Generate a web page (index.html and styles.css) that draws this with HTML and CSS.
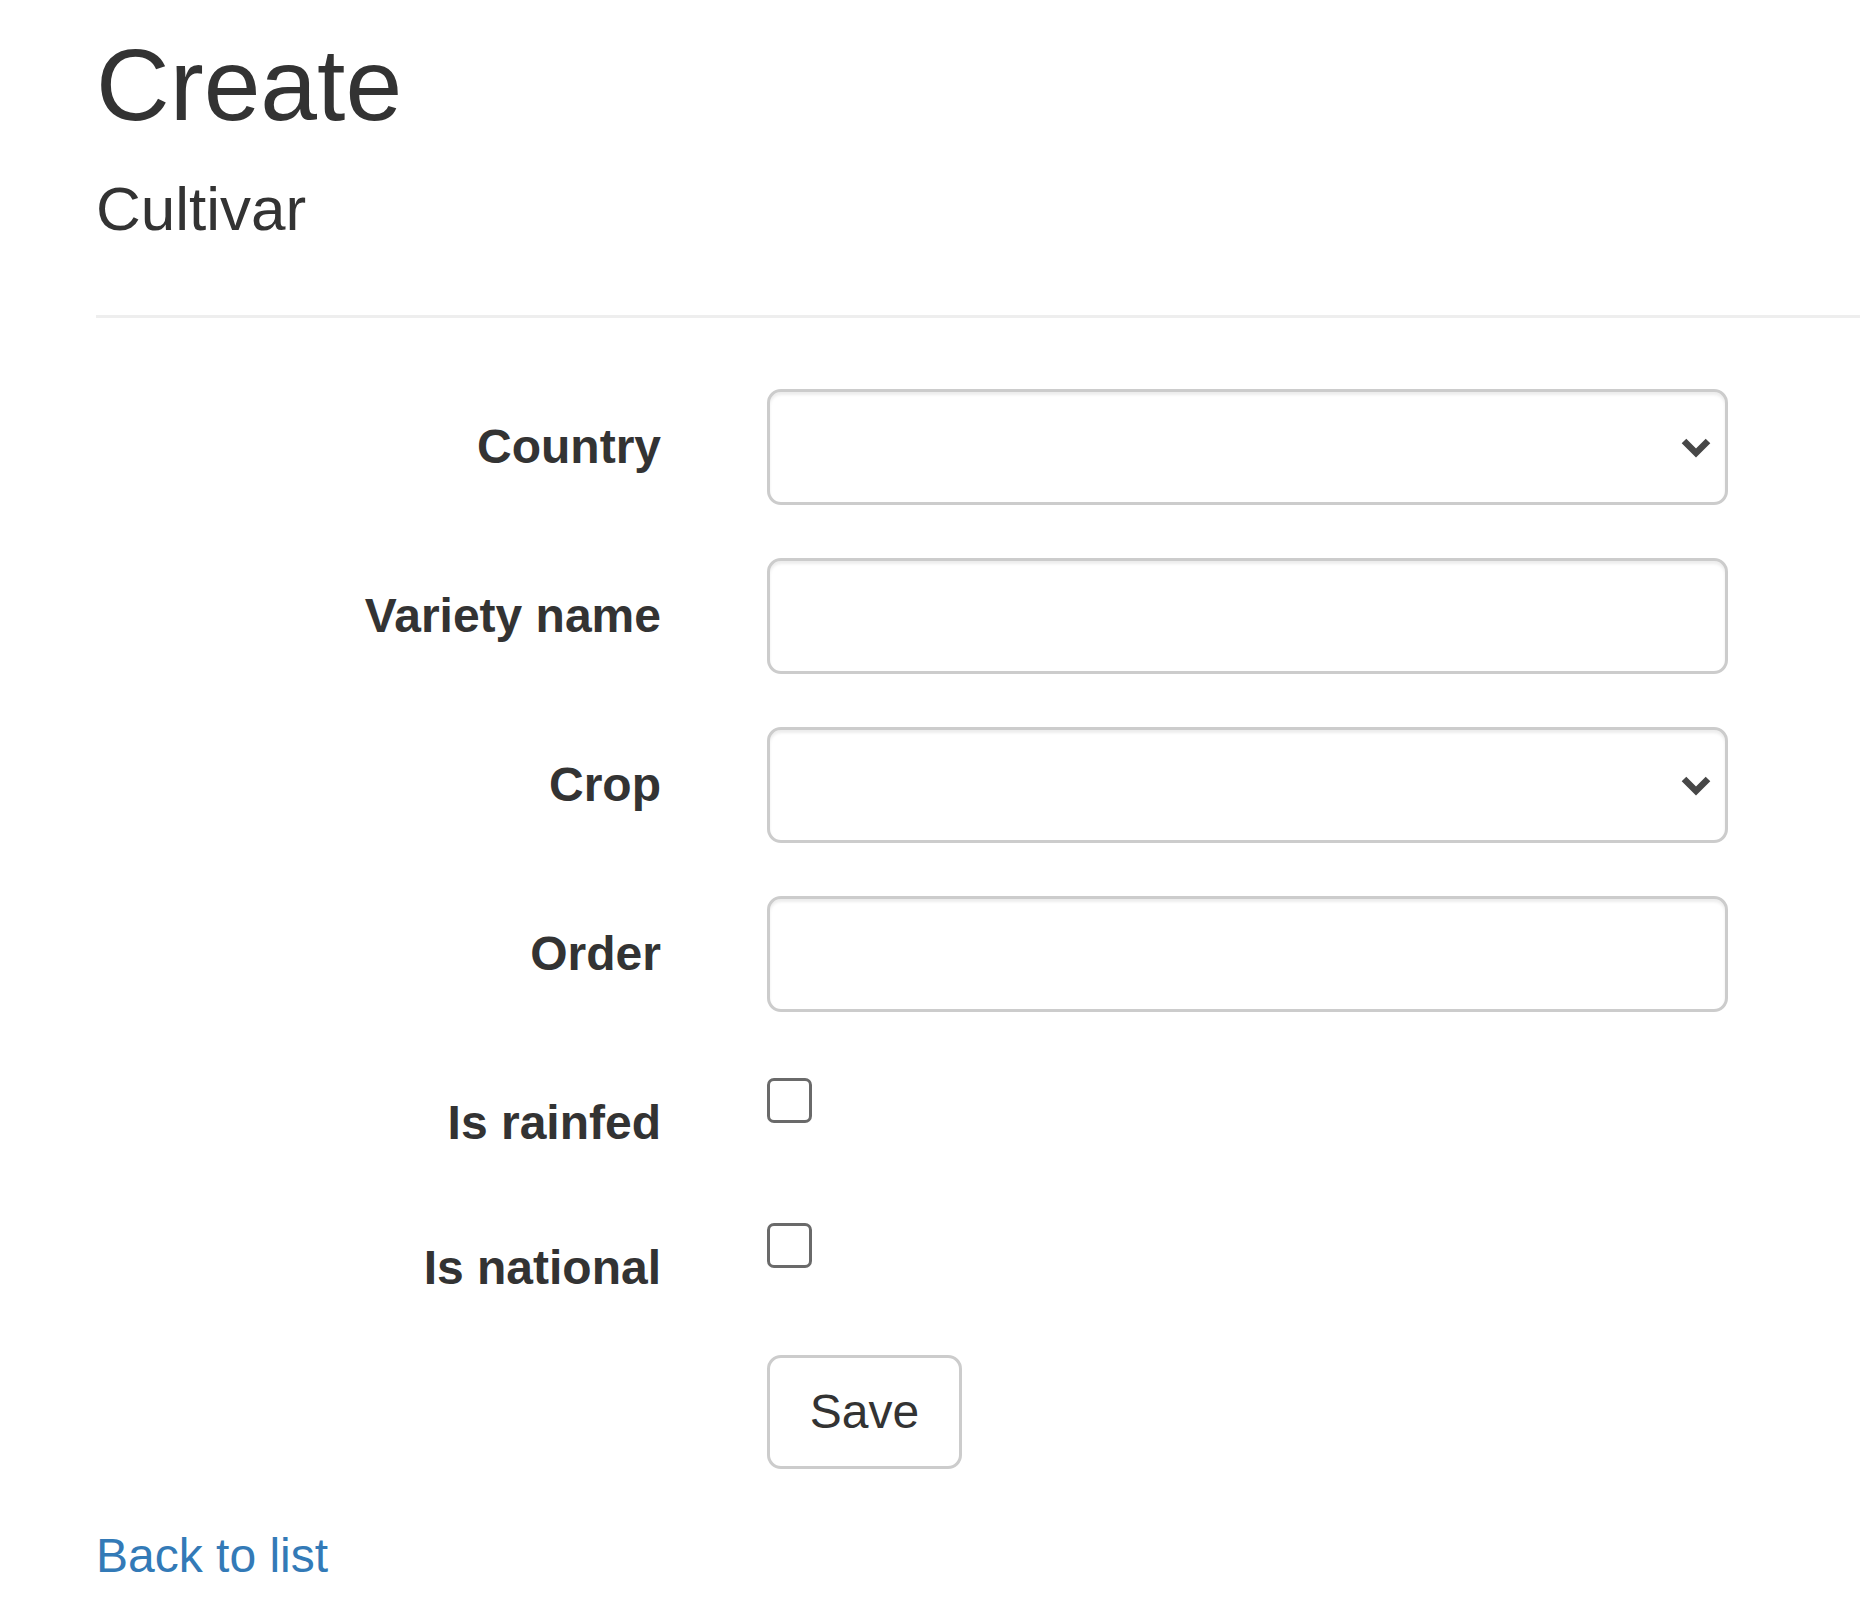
FILE: index.html
```html
<!DOCTYPE html>
<html lang="en">
<head>
<meta charset="utf-8">
<title>Create - Cultivar</title>
<link rel="stylesheet" href="styles.css">
</head>
<body>
<div class="container">
  <h2 class="title">Create</h2>
  <h4 class="subtitle">Cultivar</h4>
  <hr class="rule">
  <form class="form">
    <div class="form-group">
      <label class="control-label" for="country">Country</label>
      <div class="field">
        <div class="select-wrap">
          <select id="country" class="form-control select"><option></option></select>
          <span class="chevron"><svg width="34" height="24" viewBox="0 0 34 24"><path d="M5 5 L17 17 L29 5" fill="none" stroke="#474747" stroke-width="6.5" stroke-linejoin="miter"/></svg></span>
        </div>
      </div>
    </div>
    <div class="form-group">
      <label class="control-label" for="variety">Variety name</label>
      <div class="field"><input id="variety" class="form-control" type="text"></div>
    </div>
    <div class="form-group">
      <label class="control-label" for="crop">Crop</label>
      <div class="field">
        <div class="select-wrap">
          <select id="crop" class="form-control select"><option></option></select>
          <span class="chevron"><svg width="34" height="24" viewBox="0 0 34 24"><path d="M5 5 L17 17 L29 5" fill="none" stroke="#474747" stroke-width="6.5" stroke-linejoin="miter"/></svg></span>
        </div>
      </div>
    </div>
    <div class="form-group">
      <label class="control-label" for="order">Order</label>
      <div class="field"><input id="order" class="form-control" type="text"></div>
    </div>
    <div class="form-group check-group">
      <label class="control-label" for="rainfed">Is rainfed</label>
      <div class="field"><input id="rainfed" class="check-box" type="checkbox"></div>
    </div>
    <div class="form-group check-group">
      <label class="control-label" for="national">Is national</label>
      <div class="field"><input id="national" class="check-box" type="checkbox"></div>
    </div>
    <div class="form-group">
      <div class="control-label empty"></div>
      <div class="field"><button type="button" class="btn">Save</button></div>
    </div>
  </form>
  <div class="back"><a href="#" class="link">Back to list</a></div>
</div>
</body>
</html>
```
FILE: styles.css
```css
html, body {
  margin: 0;
  padding: 0;
  background: #fff;
}
body {
  font-family: "Liberation Sans", Arial, Helvetica, sans-serif;
  font-size: 48px;
  line-height: 68px;
  color: #333;
}
.container {
  padding-left: 96px;
}
.title {
  font-size: 102px;
  line-height: 112px;
  font-weight: 400;
  margin: 29px 0 0;
}
.subtitle {
  font-size: 62px;
  line-height: 68px;
  font-weight: 400;
  margin: 34px 0 0;
}
.rule {
  border: 0;
  border-top: 3px solid #eee;
  margin: 72px 0 71px;
  height: 0;
}
.form {
  margin: 0;
}
.form-group {
  display: flex;
  margin-bottom: 53px;
}
.control-label {
  width: 565px;
  margin-right: 106px;
  text-align: right;
  font-weight: 700;
  padding-top: 24px;
  line-height: 68px;
  flex: none;
}
.field {
  width: 961px;
  flex: none;
}
.form-control {
  display: block;
  box-sizing: border-box;
  width: 961px;
  height: 116px;
  margin: 0;
  padding: 20px 40px;
  border: 3px solid #ccc;
  border-radius: 14px;
  background: #fff;
  box-shadow: inset 0 3px 3px rgba(0, 0, 0, 0.075);
  font-family: inherit;
  font-size: 48px;
  color: #555;
  outline: none;
}
.select {
  -webkit-appearance: none;
  appearance: none;
}
.select-wrap {
  position: relative;
}
.chevron {
  position: absolute;
  right: 15px;
  top: 47px;
  width: 34px;
  height: 24px;
  display: block;
  line-height: 0;
}
.check-group {
  height: 92px;
}
.check-box {
  -webkit-appearance: none;
  appearance: none;
  display: block;
  box-sizing: border-box;
  width: 45px;
  height: 45px;
  margin: 13px 0 0;
  border: 3px solid #6a6a6a;
  border-radius: 7px;
  background: #fff;
}
.btn {
  display: block;
  box-sizing: border-box;
  width: 195px;
  height: 114px;
  margin: 0;
  padding: 0;
  border: 3px solid #ccc;
  border-radius: 14px;
  background: #fff;
  font-family: inherit;
  font-size: 48px;
  line-height: 68px;
  color: #333;
}
.back {
  line-height: 68px;
}
.link {
  color: #337ab7;
  text-decoration: none;
}
```
